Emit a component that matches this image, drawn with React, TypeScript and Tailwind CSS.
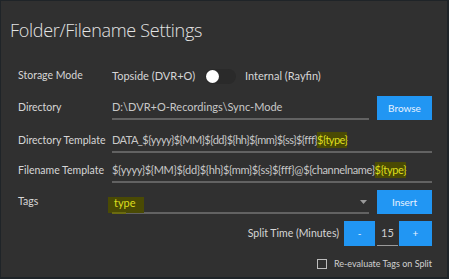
import React from "react";

const font = { fontFamily: '"Open Sans", "Noto Sans", sans-serif' };
const body = { fontFamily: 'Lato, "Open Sans", sans-serif' };

function Hl({ children }: { children: React.ReactNode }) {
  return <span className="bg-[#4a4a04] text-[#dede1e]">{children}</span>;
}

function Label({ children }: { children: React.ReactNode }) {
  return <div className="w-[94px] shrink-0 text-[10.5px] text-[#d6d6d6]">{children}</div>;
}

export default function App() {
  return (
    <div className="w-[449px] h-[279px] bg-[#1f2428] overflow-hidden" style={font}>
      <div className="w-[446px] h-[276px] mt-[1px] ml-[1px] bg-[#303030] relative">
        <div className="pl-[9px] pt-[17px] text-[18px] leading-[24px] font-light text-[#e4e4e4] tracking-[-0.3px]">
          Folder/Filename Settings
        </div>

        <div className="pl-[17px]" style={body}>
          {/* Storage mode */}
          <div className="mt-[22px] h-[24px] flex items-center">
            <Label>Storage Mode</Label>
            <span className="text-[11px] text-[#d6d6d6]">Topside (DVR+O)</span>
            <div className="ml-[10px] w-[31px] h-[15px] rounded-full bg-[#2a2a2a] relative">
              <div className="absolute left-[1px] top-[1px] w-[13px] h-[13px] rounded-full bg-white" />
            </div>
            <span className="ml-[9px] text-[11px] text-[#d6d6d6]">Internal (Rayfin)</span>
          </div>

          {/* Directory */}
          <div className="mt-[8px] h-[24px] flex items-center">
            <Label>Directory</Label>
            <div className="w-[257px] h-[24px] flex items-center border-b-2 border-[#626262] text-[11px] text-[#c8c8c8]">
              D:\DVR+O-Recordings\Sync-Mode
            </div>
            <button className="ml-[8px] w-[55px] h-[24px] bg-[#2196f3] text-[10px] text-[#e8f2ff]">
              Browse
            </button>
          </div>

          {/* Directory template */}
          <div className="mt-[9px] h-[24px] flex items-center">
            <Label>Directory Template</Label>
            <div className="w-[320px] h-[24px] flex items-center border-b-2 border-[#626262] text-[11px] text-[#c8c8c8] whitespace-nowrap tracking-[-0.55px]">
              <span>DATA_${"{yyyy}"}${"{MM}"}${"{dd}"}${"{hh}"}${"{mm}"}${"{ss}"}${"{fff}"}</span>
              <Hl>${"{type}"}</Hl>
            </div>
          </div>

          {/* Filename template */}
          <div className="mt-[6px] h-[24px] flex items-center">
            <Label>Filename Template</Label>
            <div className="w-[320px] h-[24px] flex items-center border-b-2 border-[#626262] text-[11px] text-[#c8c8c8] whitespace-nowrap tracking-[-0.35px]">
              <span>${"{yyyy}"}${"{MM}"}${"{dd}"}${"{hh}"}${"{mm}"}${"{ss}"}${"{fff}"}@${"{channelname}"}</span>
              <Hl>${"{type}"}</Hl>
            </div>
          </div>

          {/* Tags */}
          <div className="mt-[7px] h-[24px] flex items-center">
            <Label>Tags</Label>
            <div className="w-[257px] h-[24px] relative border-b-2 border-[#626262]">
              <div className="absolute left-[-4px] top-[7px] w-[36px] h-[16px] bg-[#4a4a04]" />
              <div className="absolute left-[0px] bottom-[-2px] w-[14px] h-[2px] bg-[#6b6b10]" />
              <span className="absolute left-[2px] top-[5px] text-[11px] text-[#dede1e]">type</span>
              <svg className="absolute right-[2px] top-[10px]" width="7" height="4" viewBox="0 0 7 4">
                <path d="M0 0 L7 0 L3.5 4 Z" fill="#9a9a9a" />
              </svg>
            </div>
            <button className="ml-[8px] w-[55px] h-[24px] bg-[#2196f3] text-[10px] text-[#e8f2ff]">
              Insert
            </button>
          </div>

          {/* Split time */}
          <div className="mt-[7px] h-[25px] flex items-center justify-end pr-[15px]">
            <span className="text-[10.5px] text-[#d6d6d6] mr-[5px]">Split Time (Minutes)</span>
            <button className="w-[31px] h-[25px] bg-[#2196f3] text-[10px] text-[#e8f2ff]">-</button>
            <div className="ml-[2px] w-[21px] h-[25px] flex items-center justify-center border-b border-[#9a9a9a] text-[11px] text-[#d0d0d0]">
              15
            </div>
            <button className="ml-[1px] w-[33px] h-[25px] bg-[#2196f3] text-[10px] text-[#e8f2ff]">+</button>
          </div>

          {/* Checkbox */}
          <div className="mt-[10px] h-[15px] flex items-center justify-end pr-[15px]">
            <div className="w-[10px] h-[10px] border border-[#bdbdbd] mr-[7px]" />
            <span className="text-[9px] text-[#d0d0d0]">Re-evaluate Tags on Split</span>
          </div>
        </div>
      </div>
    </div>
  );
}
